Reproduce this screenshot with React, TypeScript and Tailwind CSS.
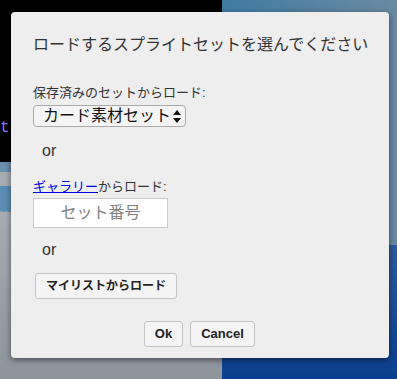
import React from "react";

const font = { fontFamily: '"Liberation Sans", "Noto Sans CJK JP", sans-serif' };

function Desktop() {
  return (
    <div className="absolute inset-0">
      {/* left window */}
      <div className="absolute left-0 top-0 w-[222px] h-[162px] bg-black">
        <span className="absolute left-0 top-[116px] text-[16px] text-[#7b7bff] font-mono">t (</span>
      </div>
      <div className="absolute left-0 top-[162px] w-[222px] h-[10px] bg-[#6c8fad]" />
      <div className="absolute left-0 top-[172px] w-[222px] h-[14px] bg-[#a7adb4]" />
      <div className="absolute left-0 top-[186px] w-[222px] h-[26px] bg-[#5c8db4] border-b border-dashed border-[#8aa0b0]" />
      <div className="absolute left-0 top-[212px] w-[302px] h-[167px] bg-gradient-to-b from-[#a7acb3] to-[#8e949c]" />
      {/* right side */}
      <div className="absolute left-[222px] top-0 w-[175px] h-[245px] bg-gradient-to-r from-[#3f7ba2] to-[#6a8aa3]" />
      <div className="absolute left-[222px] top-[245px] w-[175px] h-[134px] bg-gradient-to-b from-[#2c5c9c] to-[#0a3f90]" />
    </div>
  );
}

export default function App() {
  return (
    <div className="relative w-[397px] h-[379px] overflow-hidden" style={font}>
      <Desktop />
      <div className="absolute left-[11px] top-[12px] w-[378px] h-[346px] bg-[#eeeeee] rounded-[4px] shadow-[0_2px_6px_rgba(0,0,0,0.5)] flex flex-col pl-[22px] pr-[20px] pt-[21px] text-[#333]">
        <div className="text-[16px] leading-[24px] whitespace-nowrap">ロードするスプライトセットを選んでください</div>

        <div className="mt-[28px] text-[13px] leading-[16px] whitespace-nowrap">保存済みのセットからロード:</div>
        <div className="mt-[4px] flex">
          <div className="flex items-center h-[22px] w-[153px] border border-[#a9a9a9] rounded-[4px] bg-white/40 pl-[9px] pr-[4px]">
            <span className="text-[16px] leading-[20px] text-[#111] whitespace-nowrap">カード素材セット</span>
            <svg width="8" height="13" viewBox="0 0 8 13" className="ml-auto shrink-0">
              <path d="M4 0 L8 5 L0 5 Z" fill="#111" />
              <path d="M0 8 L8 8 L4 13 Z" fill="#111" />
            </svg>
          </div>
        </div>

        <div className="mt-[12px] ml-[9px] text-[16px] leading-[24px]">or</div>

        <div className="mt-[16px] text-[13px] leading-[16px] whitespace-nowrap">
          <a className="text-[#0000ee] underline">ギャラリー</a>からロード:
        </div>
        <div className="mt-[3px]">
          <div className="w-[135px] h-[30px] bg-white border border-[#cccccc] flex items-center justify-center text-[16px] text-[#808080]">
            セット番号
          </div>
        </div>

        <div className="mt-[10px] ml-[9px] text-[16px] leading-[24px]">or</div>

        <div className="mt-[11px] ml-[2px] flex">
          <button className="h-[26px] px-[10px] bg-[#f4f4f4] border border-[#c4c4c4] rounded-[3px] text-[12px] font-bold text-[#222] whitespace-nowrap">
            マイリストからロード
          </button>
        </div>

        <div className="mt-[22px] ml-[111px] flex gap-[7px]">
          <button className="h-[26px] w-[39px] bg-[#f4f4f4] border border-[#c4c4c4] rounded-[3px] text-[13px] font-bold text-[#222]">
            Ok
          </button>
          <button className="h-[26px] w-[65px] bg-[#f4f4f4] border border-[#c4c4c4] rounded-[3px] text-[13px] font-bold text-[#222]">
            Cancel
          </button>
        </div>
      </div>
    </div>
  );
}
